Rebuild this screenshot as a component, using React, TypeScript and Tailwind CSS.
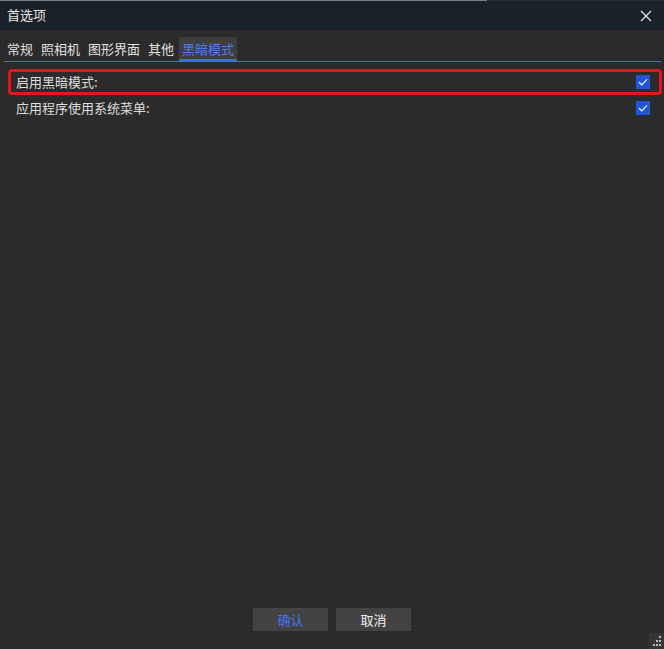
import React, { useState } from 'react';

const font = { fontFamily: '"Noto Sans CJK SC", "Noto Sans", sans-serif' };

const tabs = ['常规', '照相机', '图形界面', '其他', '黑暗模式'];

function Check({ checked }: { checked: boolean }) {
  return (
    <div className="w-[14px] h-[14px] bg-[#2255d6] flex items-center justify-center">
      {checked && (
        <svg width="10" height="8" viewBox="0 0 10 8">
          <path d="M1 4.2 L3.8 6.8 L9 1.4" fill="none" stroke="#f2f2f2" strokeWidth="1.2" />
        </svg>
      )}
    </div>
  );
}

export default function App() {
  const [active, setActive] = useState(4);

  return (
    <div className="w-[664px] h-[649px] bg-[#2b2b2b] flex flex-col text-[13px] text-[#dedede]" style={font}>
      {/* Title bar */}
      <div className="h-px w-[487px] bg-[#7d7d7d]" />
      <div className="h-[29px] bg-[#1b2128] flex items-center justify-between pl-[7px] pr-[12px]">
        <span className="text-[#e6e6e6] -mt-[1px]">首选项</span>
        <svg width="12" height="12" viewBox="0 0 12 12">
          <path d="M1 1 L11 11 M11 1 L1 11" stroke="#e8e8e8" strokeWidth="1.2" />
        </svg>
      </div>

      {/* Tabs */}
      <div className="ml-[4px] mr-[3px] mt-[7px] flex gap-[2px] border-b border-[#3b6fe0] h-[25px]">
        {tabs.map((t, i) => (
          <button
            key={t}
            onClick={() => setActive(i)}
            className={
              'px-[3px] h-[24px] leading-[21px] border-b-2 ' +
              (i === active
                ? 'bg-[#3e3e3e] text-[#4a7cf0] border-[#3b6fe0]'
                : 'border-transparent text-[#e0e0e0]')
            }
          >
            {t}
          </button>
        ))}
      </div>

      {/* Options */}
      <div className="ml-[8px] mr-[2px] mt-[7px] flex flex-col">
        <div className="h-[26px] border-[3px] border-[#e8141c] rounded-[4px] flex items-center justify-between pl-[5px] pr-[9px]">
          <span>启用黑暗模式:</span>
          <Check checked />
        </div>
        <div className="h-[25px] flex items-center justify-between pl-[8px] pr-[12px]">
          <span>应用程序使用系统菜单:</span>
          <Check checked />
        </div>
      </div>

      <div className="flex-1" />

      {/* Footer */}
      <div className="relative h-[32px] flex justify-center gap-[8px] mb-[9px]">
        <button className="w-[75px] h-[23px] bg-[#434343] text-[#4272ee]">确认</button>
        <button className="w-[75px] h-[23px] bg-[#434343] text-[#f0f0f0]">取消</button>
        <div className="absolute right-0 -bottom-[9px] w-[15px] h-[16px] bg-[#353535] flex items-end justify-end p-[1px]">
          <svg width="12" height="12" viewBox="0 0 12 12">
            <rect x="8" y="0" width="2" height="2" fill="#bdbdbd" />
            <rect x="5" y="4" width="2" height="2" fill="#bdbdbd" />
            <rect x="8" y="4" width="2" height="2" fill="#bdbdbd" />
            <rect x="2" y="8" width="2" height="2" fill="#bdbdbd" />
            <rect x="5" y="8" width="2" height="2" fill="#bdbdbd" />
            <rect x="8" y="8" width="2" height="2" fill="#bdbdbd" />
          </svg>
        </div>
      </div>
    </div>
  );
}
